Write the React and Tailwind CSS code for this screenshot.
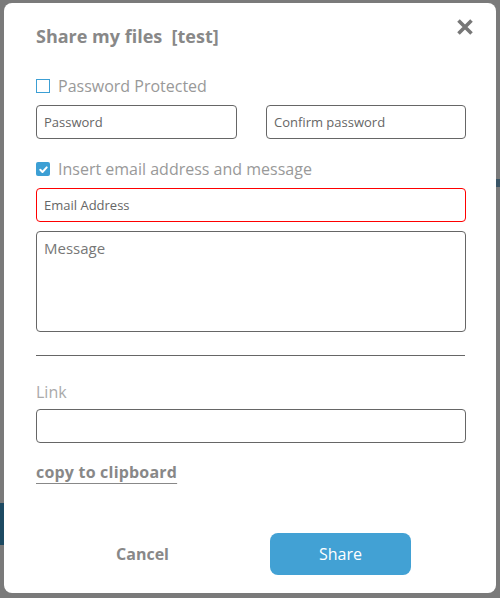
import { useState } from 'react'

// ─── Small pieces ─────────────────────────────────────────────────────────────

function Checkbox({ checked }) {
  return checked ? (
    <span className="w-[14px] h-[14px] rounded-[2px] bg-[#3c9fd4] flex items-center justify-center shrink-0">
      <svg className="w-[11px] h-[11px]" viewBox="0 0 12 12" fill="none" stroke="white" strokeWidth={2.2} strokeLinecap="round" strokeLinejoin="round">
        <path d="M2.5 6.3l2.4 2.4 4.6-5" />
      </svg>
    </span>
  ) : (
    <span className="w-[14px] h-[14px] border border-[#3c9fd4] bg-white shrink-0" />
  )
}

function Field({ placeholder, className = 'w-full' }) {
  return (
    <input
      placeholder={placeholder}
      className={`h-[34px] min-w-0 rounded-[4px] border bg-white px-[7px] text-[13px] text-[#555] placeholder:text-[#666] outline-none ${className}`}
    />
  )
}

// ─── Page ─────────────────────────────────────────────────────────────────────

export default function App() {
  const [pwd, setPwd] = useState(false)
  const [mail, setMail] = useState(true)

  return (
    <div className="relative w-[500px] h-[598px] bg-[#7a7a7a] overflow-hidden" style={{ fontFamily: '"Open Sans", "Noto Sans", sans-serif' }}>
      {/* bits of the page behind the overlay */}
      <div className="absolute left-0 top-[503px] w-[6px] h-[42px] bg-[#1d4a62]" />
      <div className="absolute right-0 top-[179px] w-[6px] h-[8px] bg-[#3a5566]" />

      <div className="relative ml-[4px] mt-[3px] w-[492px] h-[590px] bg-white rounded-[8px] pl-[32px] pr-[30px] pt-[21px] flex flex-col">
        <button className="absolute right-[22px] top-[15px] text-[#777]">
          <svg className="w-[18px] h-[18px]" viewBox="0 0 18 18" fill="none" stroke="currentColor" strokeWidth={3.6}>
            <path d="M2.5 2.5l13 13M15.5 2.5l-13 13" />
          </svg>
        </button>

        <h1 className="h-[24px] leading-[24px] text-[18px] font-bold text-[#888] whitespace-pre">
          Share my files  [test]
        </h1>

        <label className="mt-[28px] h-[20px] flex items-center gap-[8px] cursor-pointer" onClick={() => setPwd(!pwd)}>
          <Checkbox checked={pwd} />
          <span className="text-[16px] text-[#999] leading-[20px]">Password Protected</span>
        </label>

        <div className="mt-[9px] flex gap-[29px]">
          <Field placeholder="Password" className="border-[#666] w-[201px]" />
          <Field placeholder="Confirm password" className="border-[#666] w-[200px]" />
        </div>

        <label className="mt-[20px] h-[20px] flex items-center gap-[8px] cursor-pointer" onClick={() => setMail(!mail)}>
          <Checkbox checked={mail} />
          <span className="text-[16px] text-[#999] leading-[20px]">Insert email address and message</span>
        </label>

        <Field placeholder="Email Address" className="mt-[9px] w-full border-[#ff0000]" />

        <textarea
          placeholder="Message"
          className="mt-[9px] h-[101px] w-full resize-none rounded-[4px] border border-[#666] px-[7px] py-[5px] text-[15px] text-[#555] placeholder:text-[#777] outline-none"
        />

        <div className="mt-[23px] h-px bg-[#666] mr-[1px]" />

        <p className="mt-[26px] h-[20px] leading-[20px] text-[16px] text-[#aaa]">Link</p>

        <Field className="mt-[7px] w-full border-[#666]" />

        <div className="mt-[19px] h-[20px] leading-[20px]">
          <a className="text-[16px] font-bold text-[#888] tracking-[0.2px] underline decoration-1 underline-offset-[5px] cursor-pointer">
            copy to clipboard
          </a>
        </div>

        <div className="mt-[51px] flex gap-[57px] pl-[36px]">
          <button className="w-[141px] h-[42px] text-[16px] font-bold text-[#888]">Cancel</button>
          <button className="w-[141px] h-[42px] rounded-[8px] bg-[#42a1d4] text-[16px] text-white">Share</button>
        </div>
      </div>
    </div>
  )
}
